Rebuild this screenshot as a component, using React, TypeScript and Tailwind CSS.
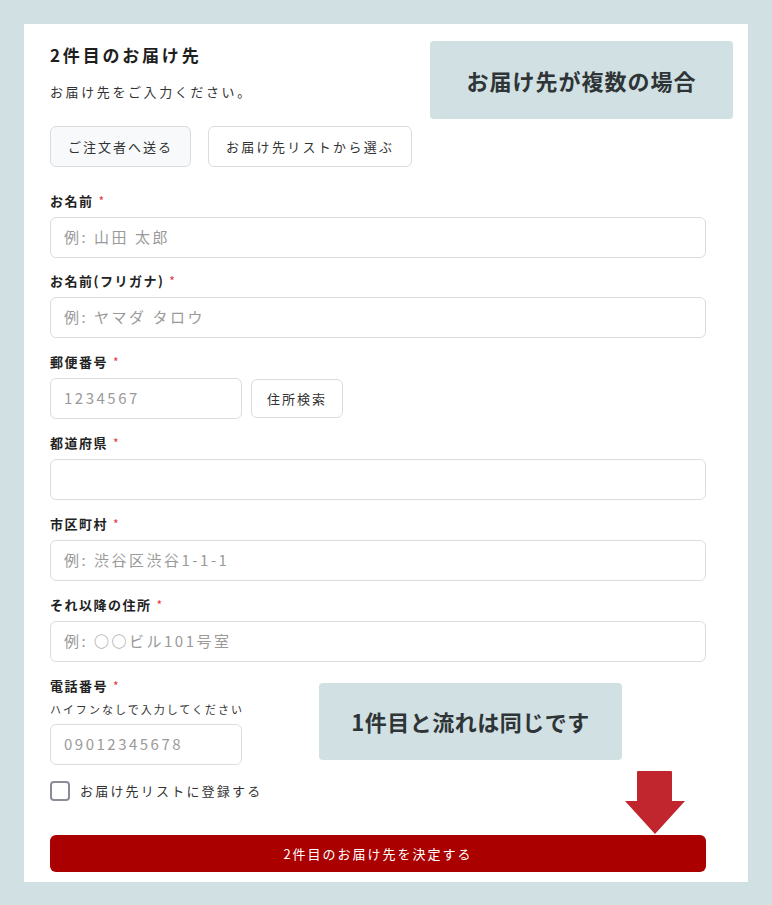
import React from 'react';

const font = { fontFamily: '"Noto Sans CJK JP", "Noto Sans", sans-serif' };

function Label({ text }: { text: string }) {
  return (
    <div className="h-[20px] flex items-center text-[13px] font-bold text-[#222] tracking-[1.5px]">
      {text}
      <span className="ml-[5px] text-[#e0393e] text-[12px] font-normal">*</span>
    </div>
  );
}

function Input({ placeholder, w }: { placeholder?: string; w?: string }) {
  return (
    <div className={`h-[41px] ${w ?? 'w-full'} border border-[#dcdcdc] rounded-[6px] bg-white flex items-center px-[13px] text-[15px] text-[#9a9a9a] tracking-[2.5px]`}>
      {placeholder}
    </div>
  );
}

export default function App() {
  const fields = [
    { label: 'お名前', ph: '例: 山田 太郎', mb: 'mb-[13px]' },
    { label: 'お名前(フリガナ)', ph: '例: ヤマダ タロウ', mb: 'mb-[14px]' },
  ];
  const fields2 = [
    { label: '都道府県', ph: '' },
    { label: '市区町村', ph: '例: 渋谷区渋谷1-1-1' },
    { label: 'それ以降の住所', ph: '例: ○○ビル101号室' },
  ];

  return (
    <div className="min-h-screen w-full bg-[#d0e0e3] pt-[24px] pl-[24px]" style={font}>
      <div className="relative w-[724px] h-[858px] bg-white pl-[26px] pr-[42px] pt-[19px]">
        <h2 className="h-[24px] flex items-center text-[17px] font-bold text-[#1f1f1f] tracking-[2.8px]">2件目のお届け先</h2>
        <p className="mt-[15px] h-[20px] flex items-center text-[13px] text-[#333] tracking-[2.6px]">お届け先をご入力ください。</p>

        <div className="mt-[24px] flex gap-[17px]">
          <button className="h-[41px] px-[17px] rounded-[6px] border border-[#dcdcdc] bg-[#f7f9fa] text-[13px] text-[#333] tracking-[2px]">ご注文者へ送る</button>
          <button className="h-[41px] px-[17px] rounded-[6px] border border-[#dcdcdc] bg-white text-[13px] text-[#333] tracking-[2.3px]">お届け先リストから選ぶ</button>
        </div>

        <div className="mt-[24px] flex flex-col">
          {fields.map((f) => (
            <div key={f.label} className={`flex flex-col gap-[6px] ${f.mb}`}>
              <Label text={f.label} />
              <Input placeholder={f.ph} />
            </div>
          ))}

          <div className="flex flex-col gap-[6px] mb-[14px]">
            <Label text="郵便番号" />
            <div className="flex gap-[9px] items-center">
              <Input placeholder="1234567" w="w-[192px]" />
              <button className="h-[39px] px-[15px] rounded-[6px] border border-[#dcdcdc] bg-white text-[13px] text-[#333] tracking-[2px]">住所検索</button>
            </div>
          </div>

          {fields2.map((f) => (
            <div key={f.label} className="flex flex-col gap-[6px] mb-[14px]">
              <Label text={f.label} />
              <Input placeholder={f.ph} />
            </div>
          ))}

          <div className="flex flex-col">
            <Label text="電話番号" />
            <p className="mt-[4px] h-[18px] flex items-center text-[11px] text-[#333] tracking-[2px]">ハイフンなしで入力してください</p>
            <div className="mt-[6px]">
              <Input placeholder="09012345678" w="w-[192px]" />
            </div>
          </div>

          <label className="mt-[16px] flex items-center gap-[10px] h-[20px]">
            <span className="w-[20px] h-[20px] rounded-[4px] border-2 border-[#8c8c99] bg-white" />
            <span className="text-[13px] text-[#333] tracking-[2.2px]">お届け先リストに登録する</span>
          </label>

          <button className="mt-[34px] h-[37px] w-full rounded-[6px] bg-[#aa0000] text-white text-[13px] tracking-[2px]">2件目のお届け先を決定する</button>
        </div>

        {/* annotations */}
        <div className="absolute left-[406px] top-[17px] w-[303px] h-[78px] rounded-[4px] bg-[#d0e0e3] flex items-center justify-center text-[22px] font-bold text-[#2f3436] tracking-[1px]">
          お届け先が複数の場合
        </div>
        <div className="absolute left-[295px] top-[659px] w-[303px] h-[77px] rounded-[4px] bg-[#d0e0e3] flex items-center justify-center text-[22px] font-bold text-[#2f3436] tracking-[0.5px]">
          1件目と流れは同じです
        </div>
        <svg className="absolute left-[601px] top-[747px]" width="60" height="63" viewBox="0 0 60 63">
          <rect x="12" y="0" width="35" height="32" rx="1" fill="#c1262e" />
          <polygon points="0,30 60,30 30,63" fill="#c1262e" />
        </svg>
      </div>
    </div>
  );
}
